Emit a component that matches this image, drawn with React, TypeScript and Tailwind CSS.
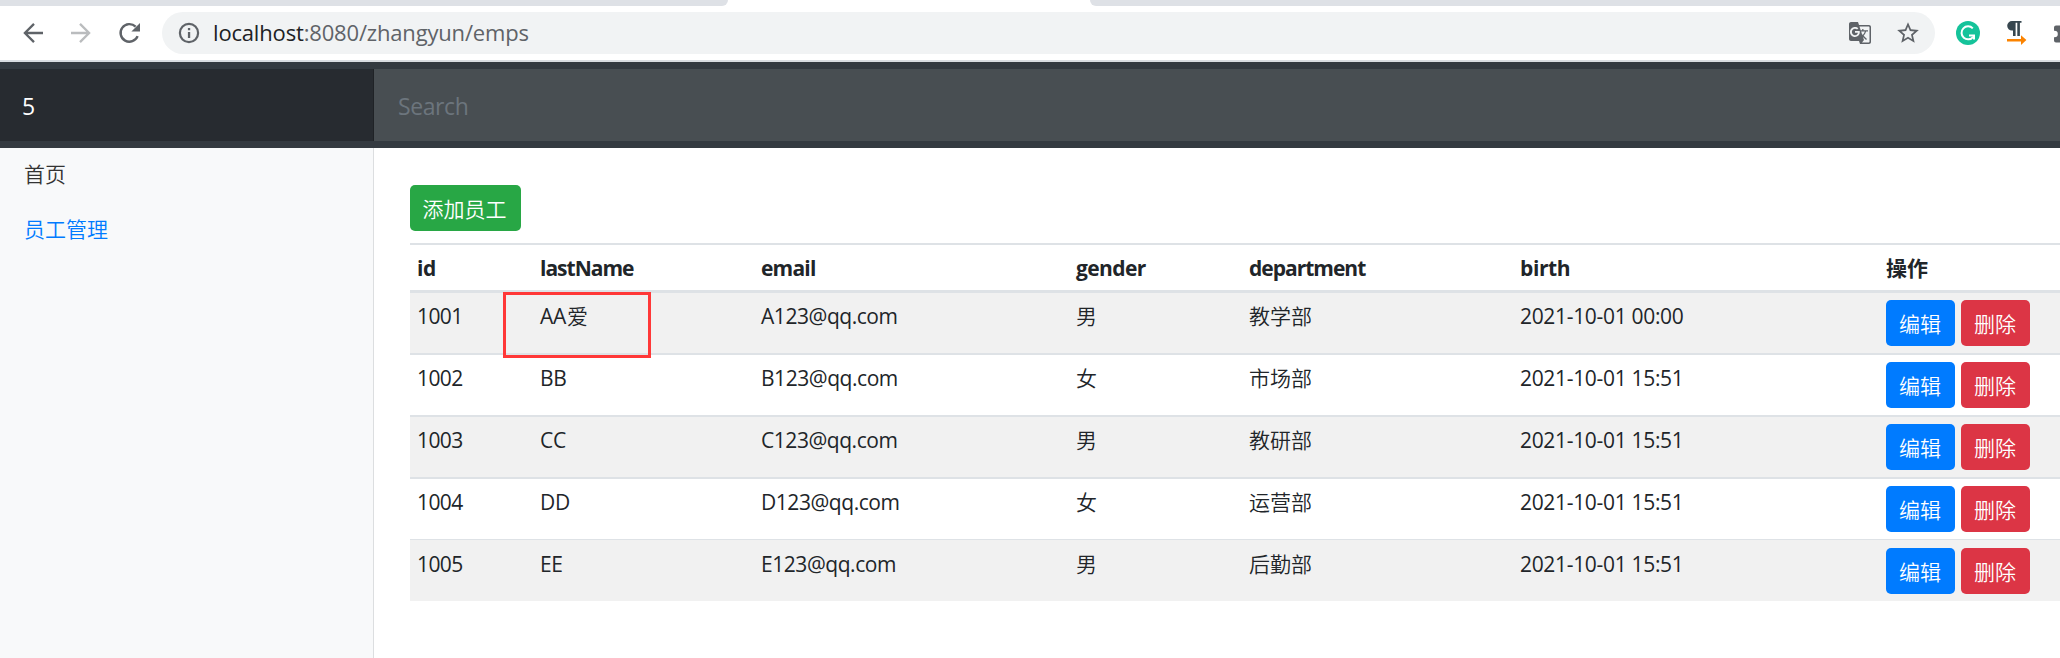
import type { ReactNode } from "react";
import { MdGTranslate, MdStarBorder } from "react-icons/md";

type Employee = {
  id: string;
  lastName: ReactNode;
  email: string;
  gender: string;
  department: string;
  birth: string;
  marked?: boolean;
};

const employees: Employee[] = [
  { id: "1001", lastName: <>AA<span className="ml-px font-[350] tracking-normal">爱</span></>, email: "A123@qq.com", gender: "男", department: "教学部", birth: "2021-10-01 00:00", marked: true },
  { id: "1002", lastName: "BB", email: "B123@qq.com", gender: "女", department: "市场部", birth: "2021-10-01 15:51" },
  { id: "1003", lastName: "CC", email: "C123@qq.com", gender: "男", department: "教研部", birth: "2021-10-01 15:51" },
  { id: "1004", lastName: "DD", email: "D123@qq.com", gender: "女", department: "运营部", birth: "2021-10-01 15:51" },
  { id: "1005", lastName: "EE", email: "E123@qq.com", gender: "男", department: "后勤部", birth: "2021-10-01 15:51" },
];

// Top border and row height of each table row.
const rowStyles = [
  "h-[63px] border-t-[3px] bg-[#f1f1f1]",
  "h-[62px] border-t-2 bg-white",
  "h-[62px] border-t-2 bg-[#f1f1f1]",
  "h-[62px] border-t-2 bg-white",
  "h-[62px] border-t bg-[#f1f1f1] pt-px",
];

const columns = "grid grid-cols-[123px_221px_315px_173px_271px_366px_1fr]";

function BackIcon() {
  return (
    <svg width="24" height="24" viewBox="0 0 24 24" fill="none" stroke="currentColor" strokeWidth="2.3">
      <path d="M22 12H4M13 2.9L3.9 12l9.1 9.1" />
    </svg>
  );
}

function ForwardIcon() {
  return (
    <svg width="24" height="24" viewBox="0 0 24 24" fill="none" stroke="currentColor" strokeWidth="2.3">
      <path d="M2 12h18M11 2.9l9.1 9.1-9.1 9.1" />
    </svg>
  );
}

function ReloadIcon() {
  return (
    <svg width="24" height="24" viewBox="0 0 24 24" fill="none">
      <path d="M19.6 15.1A8.8 8.8 0 1 1 17.6 5.7" stroke="currentColor" strokeWidth="2.4" />
      <path d="M22 2v8.6h-8.6z" fill="currentColor" />
    </svg>
  );
}

function InfoIcon() {
  return (
    <svg width="22" height="22" viewBox="0 0 22 22" fill="none">
      <circle cx="11" cy="11" r="9.1" stroke="currentColor" strokeWidth="2.2" />
      <path d="M9.9 10h2.3v6H9.9zM9.9 6h2.3v2.2H9.9z" fill="currentColor" />
    </svg>
  );
}

function GrammarIcon() {
  return (
    <svg width="24" height="24" viewBox="0 0 24 24" fill="none">
      <circle cx="12" cy="12" r="12" fill="#15c39a" />
      <path d="M16.8 7.4A6.5 6.5 0 1 0 17.2 15.8" stroke="#fff" strokeWidth="2" />
      <path d="M13 14.4h5v4.2" stroke="#fff" strokeWidth="2" />
    </svg>
  );
}

function ParagraphIcon() {
  return (
    <svg width="22" height="26" viewBox="0 0 22 26">
      <path d="M6 1h9.5v1.8h-1.6V16h-2.6V2.8H9.6V16H7V10.6H6A4.8 4.8 0 0 1 6 1z" fill="#37474f" />
      <path d="M1 19h14v-3.8l5.4 4.9-5.4 4.9v-3.6H1z" fill="#fb8300" />
    </svg>
  );
}

function PuzzleIcon() {
  return (
    <svg width="6" height="18" viewBox="0 0 6 18">
      <path d="M0 2.5A2 2 0 0 1 2 .5h4v17H2a2 2 0 0 1-2-2v-3.3h.6a3.2 3.2 0 0 0 0-6.4H0z" fill="#5f6368" />
    </svg>
  );
}

function BrowserBar() {
  return (
    <header className="h-[62px] border-b-2 border-[#dadde1] bg-white">
      <div className="flex h-1.5 bg-white">
        <div className="w-[728px] rounded-br-md bg-[#dee1e6]" />
        <div className="w-[362px]" />
        <div className="flex-1 rounded-bl-md bg-[#dee1e6]" />
      </div>
      <div className="flex h-[54px] items-center text-[#5f6368]">
        <span className="ml-[21px]"><BackIcon /></span>
        <span className="ml-6 text-[#babcbe]"><ForwardIcon /></span>
        <span className="ml-[25px]"><ReloadIcon /></span>
        <div className="ml-5 flex h-[42px] w-[1773px] items-center rounded-full bg-[#f1f3f4] pl-4">
          <InfoIcon />
          <span className="ml-[13px] pb-0.5 text-[22px] leading-[30px] tracking-[-0.17px]">
            <span className="text-[#202124]">localhost</span>:8080/zhangyun/emps
          </span>
          <MdGTranslate className="ml-auto size-6" />
          <MdStarBorder className="mr-[14px] ml-[23px] size-[26px]" />
        </div>
        <span className="ml-[21px]"><GrammarIcon /></span>
        <span className="ml-[26px]"><ParagraphIcon /></span>
        <span className="ml-[26px] shrink-0 pt-0.5"><PuzzleIcon /></span>
      </div>
    </header>
  );
}

function NavBar() {
  return (
    <nav className="flex h-[86px] bg-[#343a40] py-[7px] text-[23px] leading-[34px]">
      <div className="flex w-[374px] items-center border-r border-[#1f2226] bg-[#272b30] pt-0.5 pl-[22px] text-white">5</div>
      <div className="flex flex-1 items-center bg-[#484e52] pt-0.5 pl-6 tracking-[-0.4px] text-[#6c757d]">Search</div>
    </nav>
  );
}

export default function App() {
  return (
    <div className="flex h-[658px] w-[2060px] flex-col overflow-hidden bg-white font-['Open_Sans','Noto_Sans_CJK_SC',sans-serif] text-[21px] leading-[31px] text-[#212529]">
      <BrowserBar />
      <NavBar />
      <div className="flex flex-1">
        <aside className="flex w-[374px] flex-col gap-6 border-r border-[#dcdee0] bg-[#f8f9fa] pt-[11px] pl-6 font-[350]">
          <a className="text-[#333]">首页</a>
          <a className="text-[#007bff]">员工管理</a>
        </aside>
        <main className="flex flex-1 flex-col pt-[37px] pl-9">
          <button className="flex h-[46px] w-[111px] items-center justify-center rounded-[5px] bg-[#28a745] pt-0.5 pr-0.5 font-[350] text-white">添加员工</button>
          <div className="mt-3">
            <div className={`${columns} h-[47px] border-t-2 border-[#dee2e6] pt-2 font-bold tracking-[-1px] *:pl-[7px]`}>
              <div className="tracking-[-0.4px]">id</div>
              <div>lastName</div>
              <div className="tracking-[-0.8px]">email</div>
              <div className="tracking-[-0.6px]">gender</div>
              <div>department</div>
              <div className="tracking-[-0.4px]">birth</div>
              <div className="tracking-normal">操作</div>
            </div>
            {employees.map((e, i) => (
              <div key={e.id} className={`${columns} ${rowStyles[i]} border-[#dee2e6] *:pt-2 *:pl-[7px]`}>
                <div className="tracking-[-0.6px]">{e.id}</div>
                <div className="relative tracking-[-0.3px]">
                  {e.lastName}
                  {e.marked && <span className="absolute -top-px -left-[30px] h-[66px] w-[148px] border-[3px] border-[#ff3838]" />}
                </div>
                <div className="tracking-[-0.45px]">{e.email}</div>
                <div className="font-[350]">{e.gender}</div>
                <div className="font-[350]">{e.department}</div>
                <div className="tracking-[-0.32px]">{e.birth}</div>
                <div className="-mt-px flex gap-1.5 font-[350] text-white">
                  <button className="flex h-[46px] w-[69px] items-center justify-center rounded-[5px] bg-[#007bff] pt-0.5 pr-px">编辑</button>
                  <button className="flex h-[46px] w-[69px] items-center justify-center rounded-[5px] bg-[#dc3545] pt-0.5 pr-px">删除</button>
                </div>
              </div>
            ))}
          </div>
        </main>
      </div>
    </div>
  );
}
